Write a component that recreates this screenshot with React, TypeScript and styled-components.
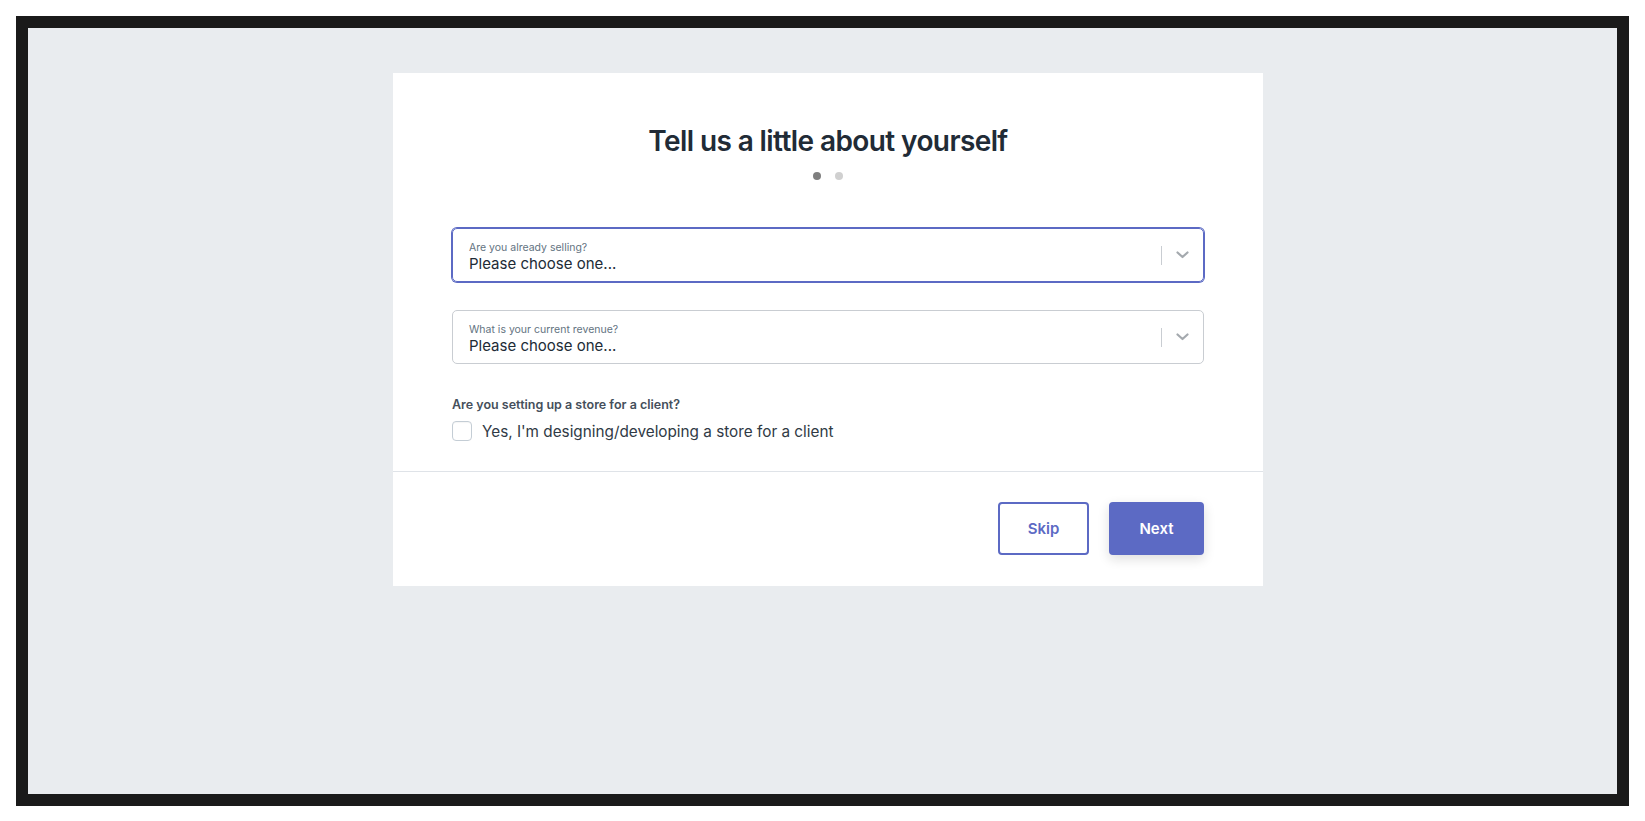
import React from 'react';
import styled, { createGlobalStyle } from 'styled-components';

const GlobalStyle = createGlobalStyle`
  html, body {
    margin: 0;
    padding: 0;
    background: #ffffff;
  }
  body {
    font-family: Inter, "Noto Sans", "Liberation Sans", sans-serif;
    color: #212b36;
  }
  * {
    box-sizing: border-box;
  }
`;

const Frame = styled.div`
  margin: 16px 16px 15px 16px;
  height: 790px;
  border: 12px solid #1a1a1a;
  background: #e9ecef;
  display: flex;
  justify-content: center;
  align-items: flex-start;
  padding: 45px 0 0 11px;
`;

const Card = styled.div`
  width: 870px;
  background: #ffffff;
`;

const CardBody = styled.div`
  padding: 50px 59px 30px;
  display: flex;
  flex-direction: column;
`;

const Title = styled.h1`
  margin: 0;
  font-size: 28px;
  line-height: 36px;
  font-weight: 600;
  letter-spacing: -0.6px;
  text-align: center;
  color: #212b36;
`;

const Dots = styled.div`
  display: flex;
  justify-content: center;
  gap: 14px;
  margin: 13px 0 48px;
`;

const Dot = styled.span<{ $active?: boolean }>`
  width: 8px;
  height: 8px;
  border-radius: 50%;
  background: ${(p) => (p.$active ? '#7f7f7f' : '#d0d0d0')};
`;

const Fields = styled.div`
  display: flex;
  flex-direction: column;
  gap: 28px;
`;

const SelectBox = styled.div<{ $focused?: boolean }>`
  height: 54px;
  border: 1px solid ${(p) => (p.$focused ? '#5c6ac4' : '#c9cdd2')};
  box-shadow: ${(p) => (p.$focused ? '0 0 0 1px #5c6ac4' : 'none')};
  border-radius: 5px;
  display: flex;
  align-items: center;
  padding-left: 16px;
`;

const SelectText = styled.div`
  flex: 1;
  display: flex;
  flex-direction: column;
  padding-top: 4px;
`;

const SelectLabel = styled.span`
  font-size: 10.5px;
  line-height: 13px;
  color: #637381;
`;

const SelectValue = styled.span`
  font-size: 15px;
  line-height: 20px;
  color: #212b36;
`;

const Indicator = styled.div`
  display: flex;
  align-items: center;
  height: 100%;
`;

const Separator = styled.span`
  width: 1px;
  height: 19px;
  background: #c9cdd2;
`;

const Chevron = styled.span`
  width: 41px;
  display: flex;
  justify-content: center;
  align-items: center;
  color: #a4a9ae;
`;

const Question = styled.div`
  margin-top: 33px;
  font-size: 12.5px;
  line-height: 16px;
  font-weight: 600;
  color: #454f5b;
`;

const CheckRow = styled.label`
  margin-top: 8px;
  display: flex;
  align-items: center;
  gap: 10px;
  font-size: 15.3px;
  color: #303a45;
`;

const Checkbox = styled.span`
  width: 20px;
  height: 20px;
  border: 1px solid #c4cdd5;
  border-radius: 4px;
  background: #fff;
  box-shadow: inset 0 1px 1px rgba(0, 0, 0, 0.04);
`;

const Footer = styled.div`
  border-top: 1px solid #dfe3e8;
  padding: 30px 59px 31px;
  display: flex;
  justify-content: flex-end;
  gap: 20px;
`;

const Button = styled.button<{ $primary?: boolean }>`
  height: 53px;
  padding: 0;
  width: ${(p) => (p.$primary ? '95px' : '91px')};
  border-radius: 4px;
  font-family: Inter, "Noto Sans", "Liberation Sans", sans-serif;
  font-size: 15px;
  font-weight: 600;
  cursor: pointer;
  border: 2px solid #5c6ac4;
  background: ${(p) => (p.$primary ? '#5c6ac4' : '#ffffff')};
  color: ${(p) => (p.$primary ? '#ffffff' : '#5c6ac4')};
  box-shadow: ${(p) => (p.$primary ? '0 4px 12px rgba(23, 24, 24, 0.14)' : 'none')};
`;

const ChevronIcon = () => (
  <svg width="13" height="8" viewBox="0 0 13 8" fill="none">
    <path d="M1.5 1.5 L6.5 6 L11.5 1.5" stroke="currentColor" strokeWidth="2.2" strokeLinecap="round" strokeLinejoin="round" />
  </svg>
);

const Select: React.FC<{ label: string; focused?: boolean }> = ({ label, focused }) => (
  <SelectBox $focused={focused}>
    <SelectText>
      <SelectLabel>{label}</SelectLabel>
      <SelectValue>Please choose one...</SelectValue>
    </SelectText>
    <Indicator>
      <Separator />
      <Chevron>
        <ChevronIcon />
      </Chevron>
    </Indicator>
  </SelectBox>
);

export default function App() {
  return (
    <>
      <GlobalStyle />
      <Frame>
        <Card>
          <CardBody>
            <Title>Tell us a little about yourself</Title>
            <Dots>
              <Dot $active />
              <Dot />
            </Dots>
            <Fields>
              <Select label="Are you already selling?" focused />
              <Select label="What is your current revenue?" />
            </Fields>
            <Question>Are you setting up a store for a client?</Question>
            <CheckRow>
              <Checkbox />
              Yes, I'm designing/developing a store for a client
            </CheckRow>
          </CardBody>
          <Footer>
            <Button>Skip</Button>
            <Button $primary>Next</Button>
          </Footer>
        </Card>
      </Frame>
    </>
  );
}
